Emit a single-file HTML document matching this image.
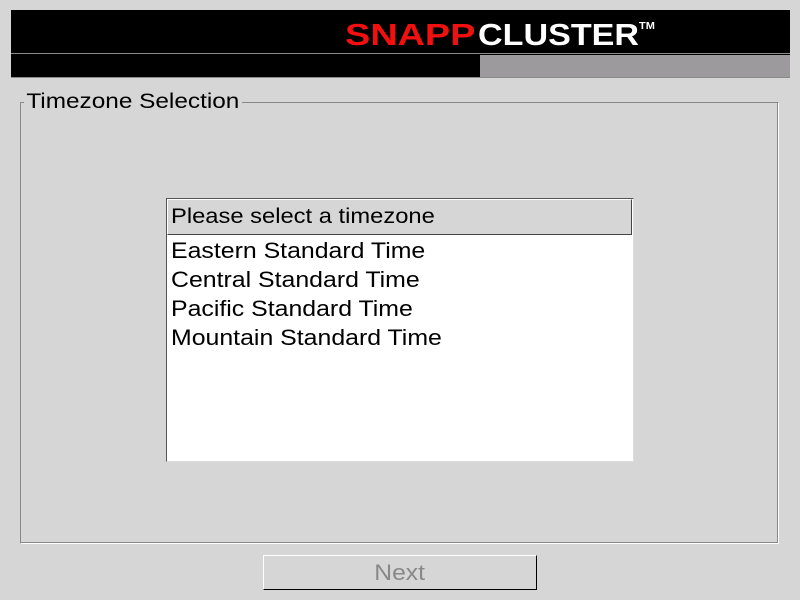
<!DOCTYPE html>
<html><head><style>
body{margin:0;width:800px;height:600px;background:#d6d6d6;position:relative;overflow:hidden;font-family:"Liberation Sans",sans-serif}
.a{position:absolute}
.s{transform:scaleX(1.13);transform-origin:left;white-space:nowrap}
</style></head><body>
<div class="a" style="left:11px;top:10px;width:779px;height:68px;background:#000"></div>
<div class="a" style="left:11px;top:53px;width:779px;height:1px;background:#8a8a8a"></div>
<div class="a" style="left:480px;top:55px;width:310px;height:22px;background:#9c9a9c"></div>
<div class="a" style="left:11px;top:77px;width:779px;height:1px;background:#8a8a8a"></div>
<div class="a" style="left:345px;top:17px;font-size:31px;font-weight:900;color:#f01010;line-height:36px;transform:scaleX(1.22);transform-origin:left">SNAPP</div>
<div class="a" style="left:478px;top:17px;font-size:31px;font-weight:900;color:#fff;line-height:36px;transform:scaleX(1.1);transform-origin:left;white-space:nowrap">CLUSTER<span style="font-size:10px;vertical-align:top;line-height:20px">TM</span></div>
<div class="a" style="left:20px;top:102px;width:757px;height:440px;border:1px solid #888;border-right-color:#fff;border-bottom-color:#fff;box-shadow:inset -1px -1px 0 #888"></div>
<div class="a" style="left:24px;top:90px;padding:0 2px;background:#d6d6d6;font-size:21px;line-height:24px;color:#000;transform:scaleX(1.16);transform-origin:left;white-space:nowrap">Timezone Selection</div>
<div class="a" style="left:166px;top:198px;width:466px;height:262px;background:#fff;border:1px solid #555;border-right-color:#ddd;border-bottom-color:#ddd"></div>
<div class="a" style="left:167px;top:199px;width:463px;height:34px;background:#d6d6d6;border:1px solid #444;border-top-color:#fff;border-left-color:#fff"></div>
<div class="a s" style="left:171px;top:204px;font-size:21px;line-height:26px">Please select a timezone</div>
<div class="a s" style="left:171px;top:236px;font-size:22px;line-height:29px">Eastern Standard Time<br>Central Standard Time<br>Pacific Standard Time<br>Mountain Standard Time</div>
<div class="a" style="left:263px;top:555px;width:272px;height:33px;background:#d6d6d6;border:1px solid #fff;border-right-color:#000;border-bottom-color:#000;text-align:center;font-size:22px;line-height:33px;color:#888"><span style="display:inline-block;transform:scaleX(1.12)">Next</span></div>
</body></html>
